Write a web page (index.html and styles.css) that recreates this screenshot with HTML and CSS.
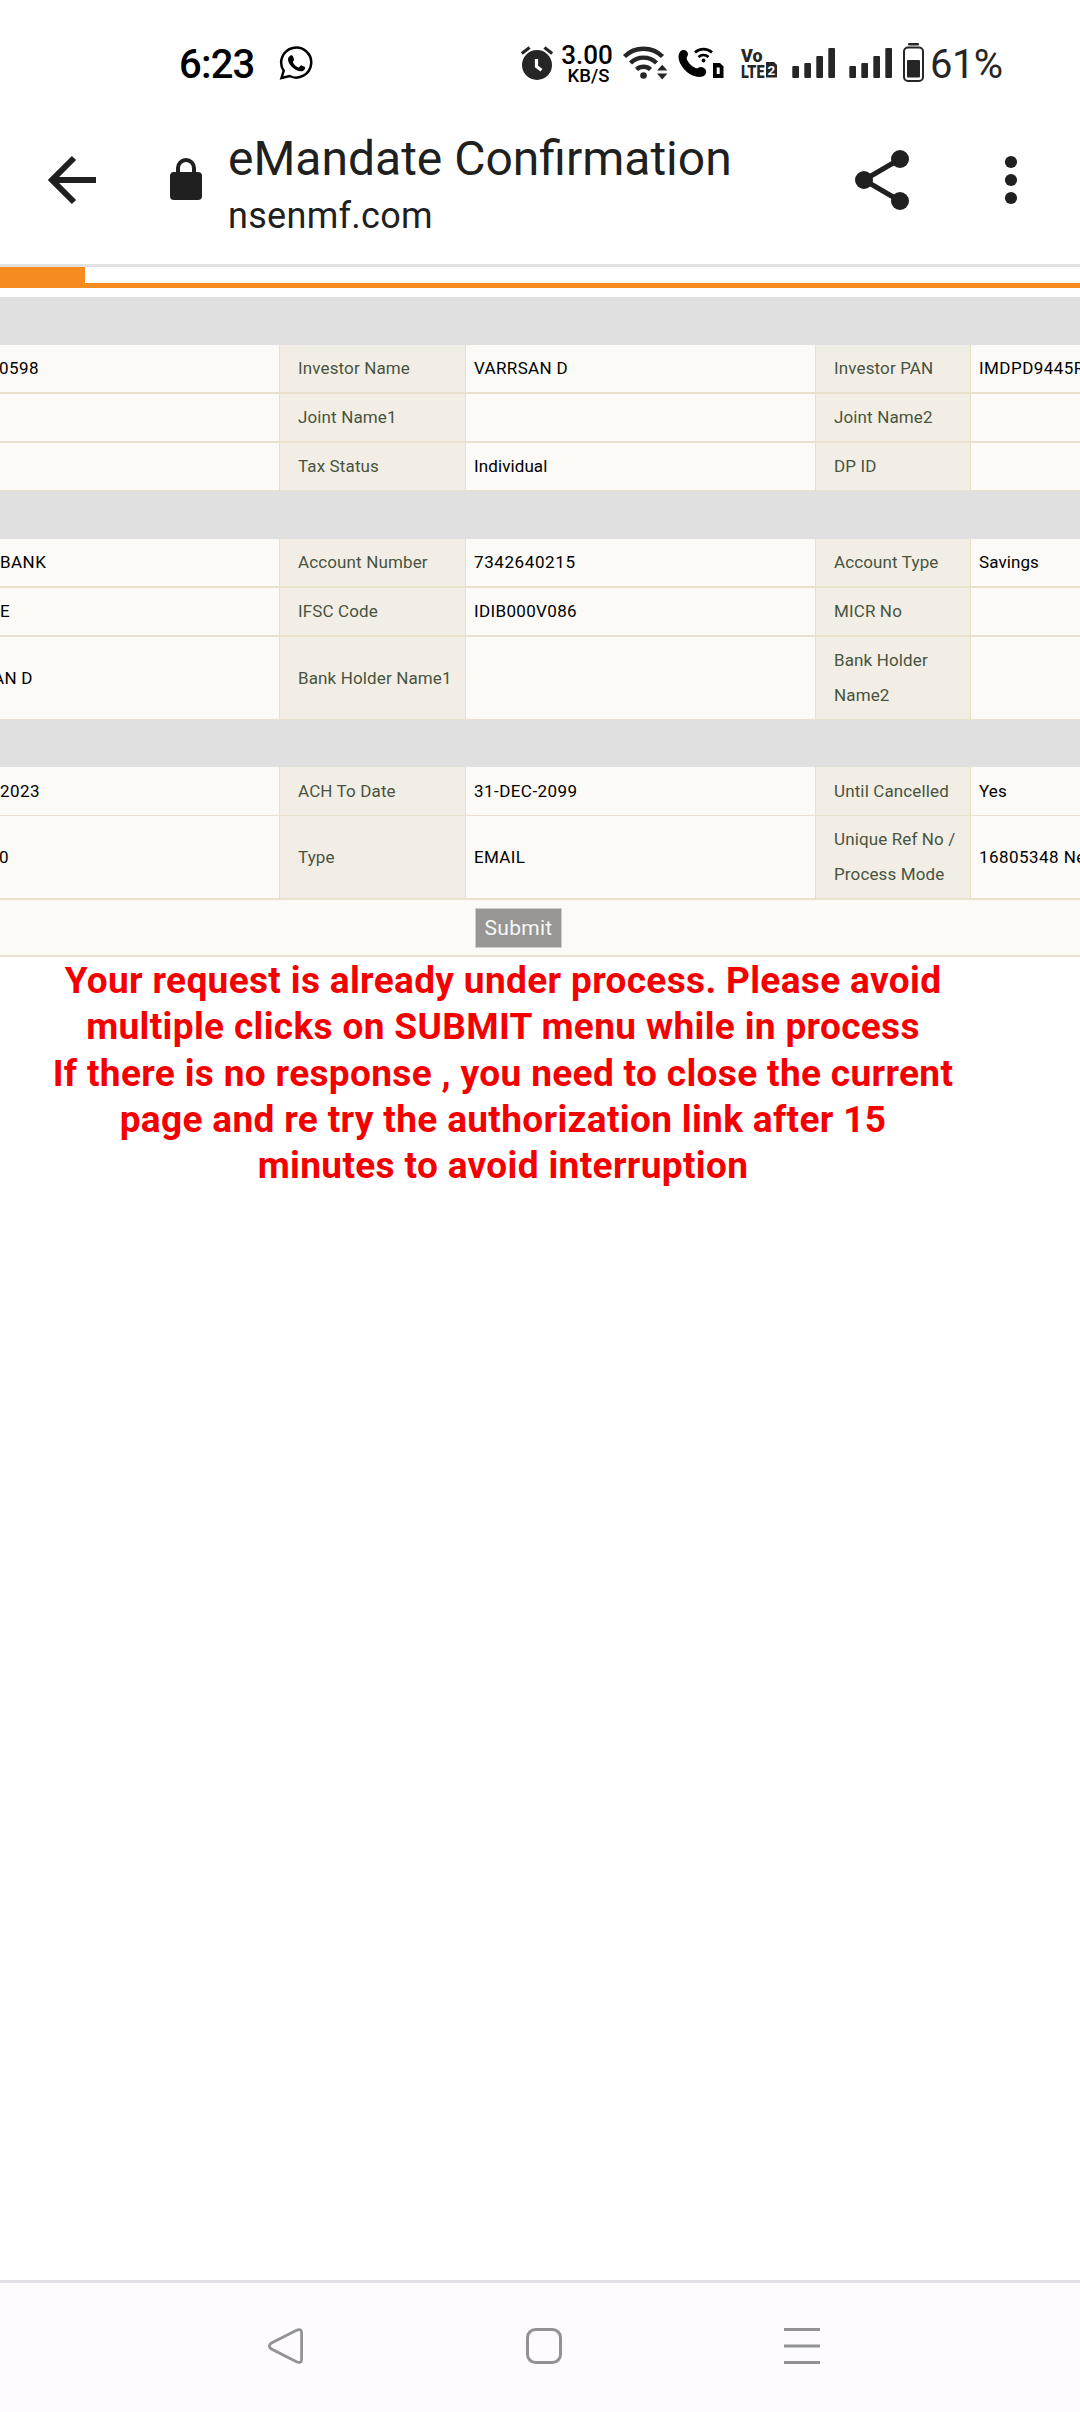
FILE: index.html
```html
<!DOCTYPE html>
<html lang="en">
<head>
<meta charset="utf-8">
<title>eMandate Confirmation</title>
<link rel="stylesheet" href="styles.css">
</head>
<body>
<div class="screen">
  <div class="status">
    <span class="clock">6:23</span>
    <svg class="whatsapp" viewBox="279 40 35 46" width="35" height="46"><path d="M281.500 78l2.200-7.200a15 15 0 1 1 5.900 5.200z" fill="none" stroke="#000" stroke-width="2.500"/><path d="M290.200 55.800c1-.7 2.200-.6 2.700.5l1.200 2.900c.3 1-1 2-1.300 2.700.9 2.600 3.400 4.700 6.200 5.500.9-.6 1.700-2.400 2.700-2l3.100 1.500c1 .7-.4 3.300-1.700 3.900-3.200 1.500-7.300-.6-9.900-2.800-2.700-2.400-5.200-5.600-5.200-8.600 0-1.600 1-2.900 2.200-3.600z"/></svg>
    <div class="indicators">
      <svg viewBox="520 40 34 46" width="34" height="46"><circle cx="537" cy="65" r="15" fill="#262626"/><path d="M521.800 53.500l7.800-6M552.200 53.500l-7.800-6" stroke="#262626" stroke-width="3.200"/><path d="M536.500 59v7.500l5 3.700" fill="none" stroke="#fff" stroke-width="3.200"/></svg>
      <div class="speed"><b>3.00</b><span>KB/S</span></div>
      <svg class="wifi" viewBox="622 40 46 46" width="46" height="46"><g fill="none" stroke="#262626" stroke-width="4.400"><path d="M624.500 56.500a27 27 0 0 1 38 0"/><path d="M630.500 63a18.500 18.500 0 0 1 26 0"/><path d="M636.500 69.500a10.300 10.300 0 0 1 14 0"/></g><circle cx="643.500" cy="75.500" r="3.300" fill="#262626"/><path d="M657 70.500l5.200-5.800 5.200 5.800zM657 73.500h10.400l-5.200 6z" fill="#262626"/></svg>
      <svg class="call" viewBox="678 40 46 46" width="46" height="46"><path d="M681.500 50.500c3-1.500 6.500.8 6.500 3.800 0 2-1.800 3-1.300 4.500 1.200 3.700 4.700 7.500 9.200 9.400 1.600.7 2.500-1.300 5-1.200 4 .2 6.200 3.600 5 6.500-1.300 3.300-5.500 3.800-9 3.300-9.500-1.400-18.300-11.800-18.400-20 0-3 1.200-5.300 3-6.300z"/><g fill="none" stroke="#000" stroke-width="2.700"><path d="M695 52.500a12.500 12.500 0 0 1 17 0"/><path d="M698.500 57a7.200 7.200 0 0 1 10 0"/></g><circle cx="703.500" cy="60.500" r="1.900"/><path d="M713 63h7l3.500 3.500V78H713z"/><path d="M716.700 67.500h3v6.500h-3z" fill="#fff"/></svg>
      <svg class="volte" viewBox="740 40 38 46" width="38" height="46"><g class="volte-text"><text x="741" y="61.700" font-size="19" textLength="21.500" lengthAdjust="spacingAndGlyphs">Vo</text><text x="741" y="77.500" font-size="19" textLength="23.500" lengthAdjust="spacingAndGlyphs">LTE</text></g><path d="M766 62h8l3 3v12.500h-11z" fill="#262626"/><text x="767.500" y="74.800" font-size="13.500" class="sim">2</text></svg>
      <svg class="signal" viewBox="792 40 44 46" width="44" height="46"><g fill="#262626"><rect x="792.300" y="66" width="6.700" height="12" rx="1"/><rect x="804.300" y="63" width="6.700" height="15" rx="1"/><rect x="816.300" y="56" width="6.700" height="22" rx="1"/><rect x="828.300" y="48" width="6.700" height="30" rx="1"/></g></svg>
      <svg class="signal" viewBox="792 40 44 46" width="44" height="46"><g fill="#262626"><rect x="792.300" y="66" width="6.700" height="12" rx="1"/><rect x="804.300" y="63" width="6.700" height="15" rx="1"/><rect x="816.300" y="56" width="6.700" height="22" rx="1"/><rect x="828.300" y="48" width="6.700" height="30" rx="1"/></g></svg>
      <svg class="battery" viewBox="902 40 24 46" width="24" height="46"><rect x="908" y="43" width="11" height="2.500" rx="1" fill="#262626"/><rect x="904" y="47.500" width="19" height="33.500" rx="4" fill="none" stroke="#262626" stroke-width="2"/><rect x="907" y="60" width="13" height="17.500" rx="1" fill="#262626"/></svg>
      <span class="percent">61%</span>
    </div>
  </div>

  <header class="toolbar">
    <svg class="back" viewBox="46 154 52 52" width="52" height="52"><path d="M52 180h44M74 158L52 180 74 202" fill="none" stroke="#202020" stroke-width="6"/></svg>
    <svg class="lock" viewBox="168 156 36 46" width="36" height="46"><rect x="170" y="172" width="32" height="28" rx="4" fill="#202020"/><path d="M178 174v-6a8 8 0 0 1 16 0v6" fill="none" stroke="#202020" stroke-width="4"/></svg>
    <div class="site"><div class="title">eMandate Confirmation</div><div class="url">nsenmf.com</div></div>
    <svg class="share" viewBox="852 148 60 64" width="60" height="64"><path d="M900 159l-36 21 36 21" fill="none" stroke="#202020" stroke-width="5"/><g fill="#202020"><circle cx="864" cy="180" r="9"/><circle cx="900" cy="159" r="9"/><circle cx="900" cy="201" r="9"/></g></svg>
    <svg class="more" viewBox="1002 148 18 64" width="18" height="64"><g fill="#202020"><circle cx="1011" cy="162" r="6.100"/><circle cx="1011" cy="180" r="6.100"/><circle cx="1011" cy="198" r="6.100"/></g></svg>
  </header>

  <main>
    <div class="tabs"><div class="tab"></div></div>
    <div class="band first"></div>
    <div class="row"><div class="cut digits">0598</div><div class="label">Investor Name</div><div class="caps">VARRSAN D</div><div class="label">Investor PAN</div><div>IMDPD9445R</div></div>
    <div class="row"><div></div><div class="label">Joint Name1</div><div></div><div class="label">Joint Name2</div><div></div></div>
    <div class="row last"><div></div><div class="label">Tax Status</div><div class="word">Individual</div><div class="label">DP ID</div><div></div></div>
    <div class="band"></div>
    <div class="row"><div class="cut">BANK</div><div class="label">Account Number</div><div class="number">7342640215</div><div class="label">Account Type</div><div class="word">Savings</div></div>
    <div class="row"><div class="cut">E</div><div class="label">IFSC Code</div><div class="caps">IDIB000V086</div><div class="label">MICR No</div><div></div></div>
    <div class="row tall last"><div class="cut name">AN D</div><div class="label">Bank Holder Name1</div><div></div><div class="label">Bank Holder<br>Name2</div><div></div></div>
    <div class="band short"></div>
    <div class="row thin"><div class="cut">2023</div><div class="label">ACH To Date</div><div>31-DEC-2099</div><div class="label">Until Cancelled</div><div class="word">Yes</div></div>
    <div class="row tall"><div class="cut digits">0</div><div class="label">Type</div><div class="caps">EMAIL</div><div class="label">Unique Ref No /<br>Process Mode</div><div>16805348 Ne</div></div>
    <div class="actions"><button class="submit" type="button">Submit</button></div>
    <p class="notice">Your request is already under process. Please avoid<br>multiple clicks on SUBMIT menu while in process<br>If there is no response , you need to close the current<br>page and re try the authorization link after 15<br>minutes to avoid interruption</p>
  </main>

  <nav class="navbar">
    <svg viewBox="0 0 40 52" width="40" height="52"><path d="M5 23.200L30.500 10.200Q35.600 8 35.600 13v26q0 5-5.100 2.800L5 28.800q-3.200-2.800 0-5.600z" fill="none" stroke="#929194" stroke-width="2.800"/></svg>
    <svg viewBox="0 0 40 52" width="40" height="52"><rect x="3.500" y="9.500" width="33" height="33" rx="8" fill="none" stroke="#929194" stroke-width="3"/></svg>
    <svg viewBox="0 0 40 52" width="40" height="52"><path d="M2 9.500h36M2 26h36M2 42.500h36" stroke="#929194" stroke-width="3"/></svg>
  </nav>
</div>
</body>
</html>
```
FILE: styles.css
```css
* { box-sizing: border-box; }
body { margin: 0; background: #fff; font-family: Roboto, sans-serif; }
svg { display: block; flex: none; }

.screen { display: flex; flex-direction: column; width: 1080px; height: 2412px; overflow: hidden; }

.status { display: flex; height: 110px; padding: 40px 0 0 179px; color: #262626; }
.clock { width: 100px; font-size: 40px; font-weight: 500; line-height: 49px; letter-spacing: -.8px; color: #000; }
.indicators { display: flex; margin-left: 206px; }
.speed { display: flex; flex-direction: column; width: 52px; margin-left: 7px; padding-top: 4px; align-items: center; color: #000; font-weight: 500; }
.speed b { font-size: 26px; font-weight: 500; line-height: 23px; }
.speed span { padding-left: 3px; font-size: 18.5px; line-height: 18px; }
.wifi { margin-left: 9px; }
.call { margin-left: 10px; }
.volte { margin-left: 16px; }
.volte-text { font-weight: 900; fill: #262626; }
.sim { font-weight: 700; fill: #fff; }
.signal { margin-left: 14px; }
.signal + .signal { margin-left: 13px; }
.battery { margin-left: 9px; }
.percent { margin-left: 4px; font-size: 40px; line-height: 50px; letter-spacing: -.6px; }

.toolbar { display: flex; height: 157px; padding-left: 46px; border-bottom: 3px solid #e2e2e2; color: #202020; }
.back { margin-top: 44px; }
.lock { margin: 46px 0 0 70px; }
.site { width: 600px; margin-left: 24px; padding-top: 21px; }
.title { font-size: 48px; line-height: 56px; white-space: nowrap; }
.url { padding-top: 8px; font-size: 36px; line-height: 42px; letter-spacing: .3px; }
.share { margin: 38px 0 0 24px; }
.more { margin: 38px 0 0 90px; }

.tabs { height: 21px; border-bottom: 5px solid #f68b1f; }
.tab { width: 85px; height: 16px; background: #f68b1f; }
.band { height: 48px; background: #e0e0e0; }
.band.first { margin-top: 9px; }
.band.short { height: 47px; }

.row { display: grid; grid-template-columns: 279px 186px 350px 155px 300px; width: 1270px; height: 49px; border-bottom: 2px solid #e9e1cb; background: #fbfaf6; color: #000; font-size: 17px; line-height: 35px; letter-spacing: .45px; white-space: nowrap; }
.row.last { height: 48px; border-bottom-width: 1px; }
.row.thin { border-bottom-width: 1px; }
.row > div { display: flex; align-items: center; padding-left: 8px; border-left: 1px solid #e8dfc6; }
.row > .caps { letter-spacing: .35px; }
.row > .number { letter-spacing: .6px; }
.row > .word { letter-spacing: .1px; }
.row > .label { padding-left: 18px; background: #f2eee6; color: #485440; letter-spacing: .13px; }
.row > div:first-child { padding-left: 0; border-left: 0; }
.row.tall { height: 84px; }
.row.tall.last { height: 83px; }
.cut.digits { text-indent: -1px; }
.row > .name { text-indent: -7px; letter-spacing: .3px; }

.actions { height: 57px; padding: 8px 0 0 475px; border-bottom: 2px solid #e8e2d2; background: #fbfaf6; }
.submit { display: block; width: 87px; height: 40px; padding: 0; border: 1px solid #cfcecb; background: #979694; color: #f7f7f7; font: 21px Roboto, sans-serif; letter-spacing: .3px; }
.notice { width: 1006px; margin: 0; padding-top: 1px; color: #f50000; font-size: 37px; font-weight: 700; line-height: 46.3px; letter-spacing: .35px; text-align: center; white-space: nowrap; }

.navbar { display: flex; gap: 218px; height: 132px; margin-top: auto; padding: 37px 0 0 266px; border-top: 3px solid #e2e0e8; background: #fdfbfe; }
```
